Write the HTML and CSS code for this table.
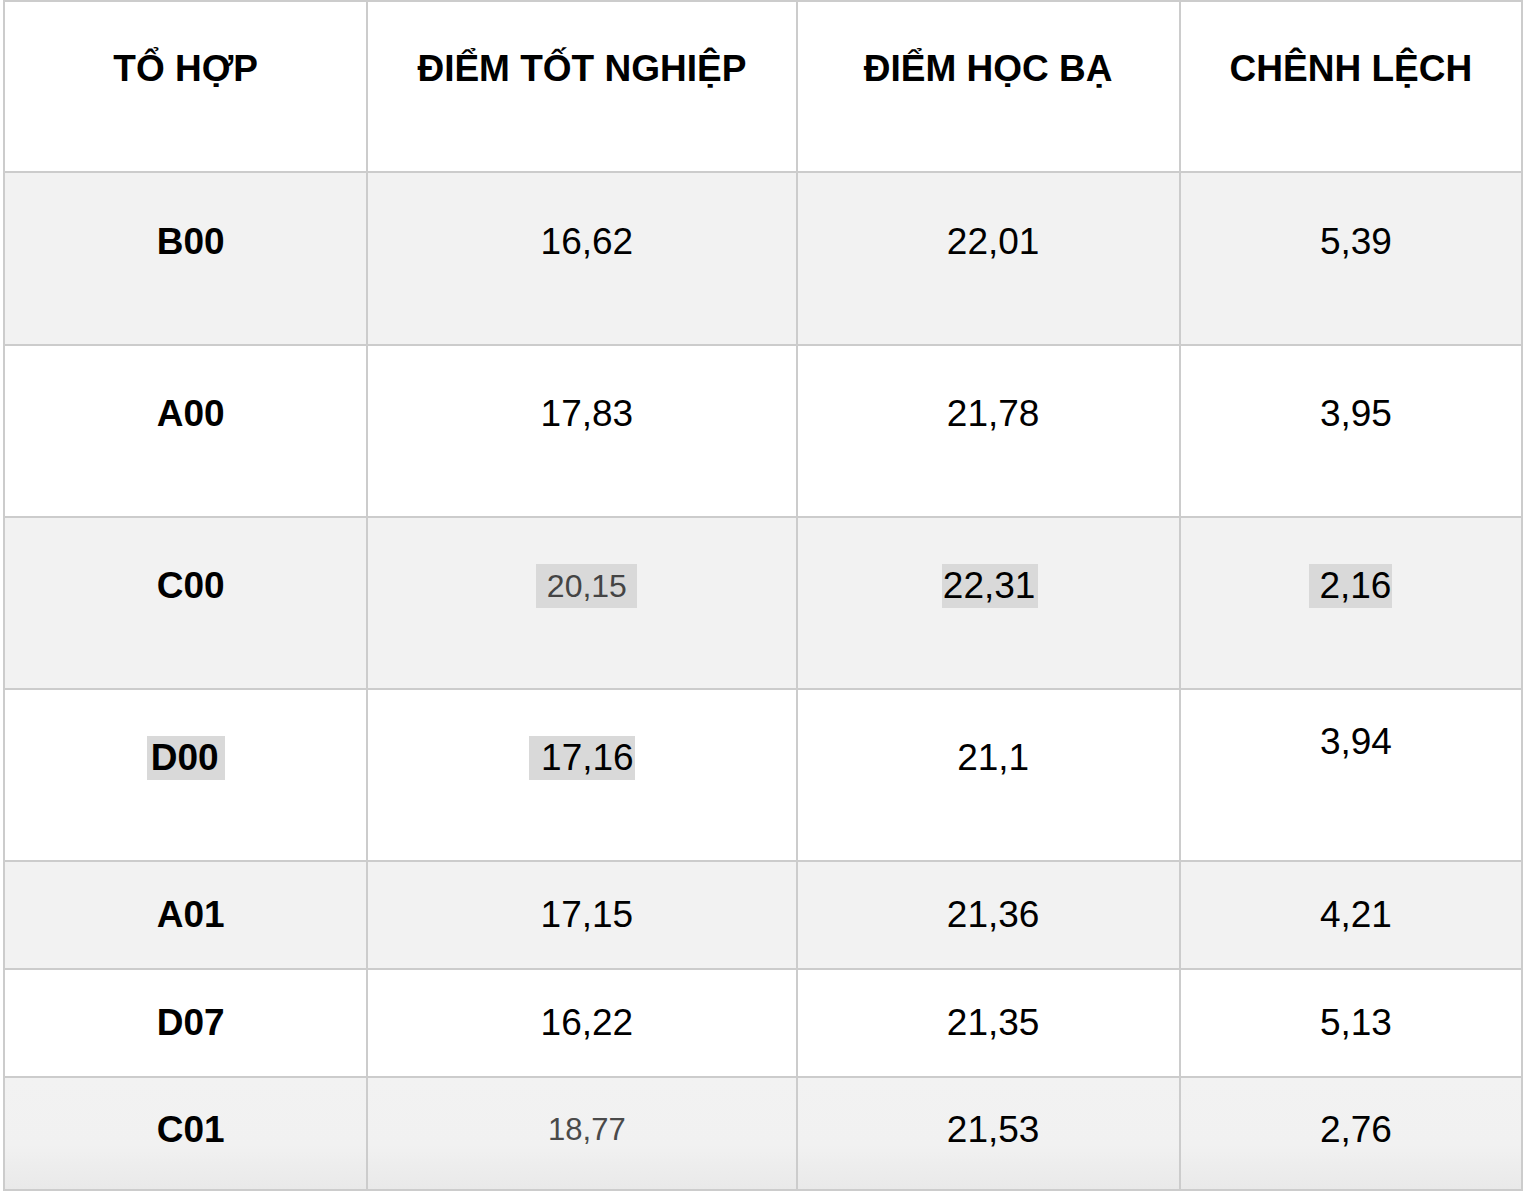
FILE: index.html
```html
<!DOCTYPE html>
<html lang="vi">
<head>
<meta charset="utf-8">
<title>Bảng điểm</title>
<link rel="stylesheet" href="styles.css">
</head>
<body>
<table class="score-table">
  <colgroup>
    <col class="c1"><col class="c2"><col class="c3"><col class="c4">
  </colgroup>
  <thead>
    <tr class="row-head">
      <th>TỔ HỢP</th>
      <th>ĐIỂM TỐT NGHIỆP</th>
      <th>ĐIỂM HỌC BẠ</th>
      <th>CHÊNH LỆCH</th>
    </tr>
  </thead>
  <tbody>
    <tr class="row-tall shade r1">
      <td><span class="v b">B00</span></td>
      <td><span class="v">16,62</span></td>
      <td><span class="v">22,01</span></td>
      <td><span class="v">5,39</span></td>
    </tr>
    <tr class="row-tall r2">
      <td><span class="v b">A00</span></td>
      <td><span class="v">17,83</span></td>
      <td><span class="v">21,78</span></td>
      <td><span class="v">3,95</span></td>
    </tr>
    <tr class="row-tall shade r3">
      <td><span class="v b">C00</span></td>
      <td><span class="v mark mark-a">20,15</span></td>
      <td><span class="v mark mark-b">22,31</span></td>
      <td><span class="v mark mark-c">2,16</span></td>
    </tr>
    <tr class="row-tall r4">
      <td><span class="v b mark mark-d">D00</span></td>
      <td><span class="v mark mark-e">17,16</span></td>
      <td><span class="v">21,1</span></td>
      <td class="raised"><span class="v">3,94</span></td>
    </tr>
    <tr class="row-short shade r5">
      <td><span class="v b">A01</span></td>
      <td><span class="v">17,15</span></td>
      <td><span class="v">21,36</span></td>
      <td><span class="v">4,21</span></td>
    </tr>
    <tr class="row-short r6">
      <td><span class="v b">D07</span></td>
      <td><span class="v">16,22</span></td>
      <td><span class="v">21,35</span></td>
      <td><span class="v">5,13</span></td>
    </tr>
    <tr class="row-last shade r7">
      <td><span class="v b">C01</span></td>
      <td><span class="v small">18,77</span></td>
      <td><span class="v">21,53</span></td>
      <td><span class="v">2,76</span></td>
    </tr>
  </tbody>
</table>
</body>
</html>
```
FILE: styles.css
```css
html, body {
  margin: 0;
  padding: 0;
  background: #ffffff;
}

body {
  font-family: "Liberation Sans", Arial, sans-serif;
  color: #000;
}

.score-table {
  border-collapse: separate;
  border-spacing: 0;
  table-layout: fixed;
  width: 1520px;
  margin-left: 3px;
  border-top: 2px solid #cccccc;
  border-left: 2px solid #cccccc;
  box-shadow: 0 5px 0 #eeeeee;
}

.c1 { width: 363px; }
.c2 { width: 429px; }
.c3 { width: 383px; }
.c4 { width: 342px; }

.score-table th,
.score-table td {
  border-right: 2px solid #cccccc;
  border-bottom: 2px solid #cccccc;
  padding: 0;
  text-align: center;
  vertical-align: middle;
  font-size: 37px;
  line-height: 42px;
}

.score-table th {
  font-weight: bold;
  padding-bottom: 36px;
}

.row-head { height: 171px; }
.row-tall { height: 172px; }
.r1 { height: 173px; }
.row-short { height: 108px; }
.row-last { height: 113px; }

.shade td { background: #f2f2f2; }
.row-last td {
  background: linear-gradient(#f2f2f2 0%, #f1f1f1 60%, #e9e9e9 100%);
}

.row-tall td { padding-bottom: 35px; }
.row-tall td.raised { padding-bottom: 68px; }
.row-short td { padding-bottom: 2px; }
.row-last td { padding-bottom: 8px; }

.v {
  display: inline-block;
  padding-left: 10px;
  line-height: 44px;
  height: 44px;
  vertical-align: middle;
}

.b { font-weight: bold; }

.mark { background: #d9d9d9; }

.mark-a {
  font-size: 32px;
  color: #444444;
  padding-left: 11px;
  padding-right: 10px;
  margin-left: 9px;
}

.mark-b {
  padding-left: 1px;
  padding-right: 3px;
  margin-left: 4px;
}

.mark-c {
  padding-left: 10px;
  padding-right: 1px;
}

.mark-d {
  padding-left: 4px;
  padding-right: 6px;
}

.mark-e {
  padding-left: 12px;
  padding-right: 1px;
}

.small {
  font-size: 31px;
  color: #4a4a4a;
}
```
